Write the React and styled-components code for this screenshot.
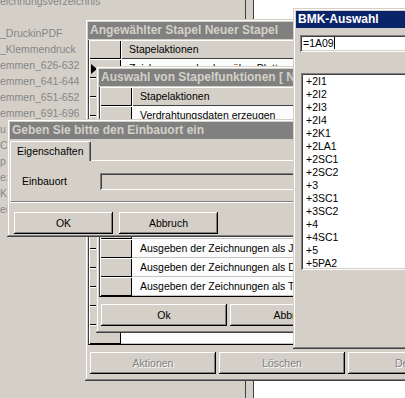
import React from 'react';
import styled, { createGlobalStyle, css } from 'styled-components';

const face = '#d4d0c8';

const raised = css`
  box-shadow: inset -1px -1px #404040, inset 1px 1px ${face}, inset -2px -2px #808080, inset 2px 2px #fff;
`;

const buttonEdge = css`
  box-shadow: inset -1px -1px #000, inset 1px 1px #fff, inset -2px -2px #808080, inset 2px 2px ${face};
`;

const sunken = css`
  box-shadow: inset 1px 1px #808080, inset -1px -1px #fff, inset 2px 2px #404040, inset -2px -2px ${face};
`;

const GlobalStyle = createGlobalStyle`
  html, body { margin: 0; padding: 0; background: ${face}; }
  body { font-family: "Liberation Sans", Arial, sans-serif; font-size: 10.5px; }
`;

const Desktop = styled.div`
  position: relative;
  width: 405px;
  height: 398px;
  overflow: hidden;
  background: ${face};
  display: flex;
`;

const TreeList = styled.ul`
  list-style: none;
  margin: -7px 0 0;
  padding: 0;
  width: 245px;
  flex: none;
  color: #868686;
  font-size: 10.5px;
  line-height: 16px;
  white-space: nowrap;
  overflow: hidden;
`;

const TreeItem = styled.li`
  height: 16px;
`;

const Splitter = styled.div`
  width: 7px;
  flex: none;
  border-left: 1px solid #404040;
  border-right: 1px solid #404040;
`;

const ContentPane = styled.div`
  flex: 1;
  background: #fff;
`;

const Window = styled.div`
  position: absolute;
  left: ${(p) => p.$x}px;
  top: ${(p) => p.$y}px;
  width: ${(p) => p.$w}px;
  height: ${(p) => p.$h}px;
  box-sizing: border-box;
  padding: 3px;
  background: ${face};
  ${raised}
  display: flex;
  flex-direction: column;
  overflow: hidden;
`;

const TitleBar = styled.div`
  flex: none;
  height: 17px;
  line-height: 17px;
  padding-left: 2px;
  margin-bottom: ${(p) => p.$gap ?? 1}px;
  background: ${(p) => (p.$active ? '#0a246a' : '#808080')};
  color: ${(p) => (p.$active ? '#fff' : face)};
  font-weight: bold;
  font-size: 12px;
  white-space: nowrap;
  overflow: hidden;
`;

/* data grid */
const Grid = styled.div`
  flex: none;
  display: flex;
  flex-direction: column;
  border-left: 1px solid #404040;
  border-bottom: 1px solid #000;
`;

const GridRow = styled.div`
  display: grid;
  grid-template-columns: 32px 1fr;
  height: 19px;
  flex: none;
`;

const RowHead = styled.div`
  background: ${face};
  box-shadow: inset 1px 1px #fff, inset -1px -1px #000;
  display: flex;
  align-items: center;
  padding-left: 2px;
`;

const CurrentArrow = styled.span`
  width: 0;
  height: 0;
  border-left: 6px solid #000;
  border-top: 5px solid transparent;
  border-bottom: 5px solid transparent;
`;

const ColHead = styled.div`
  background: ${face};
  box-shadow: inset 1px 1px #fff, inset -1px -1px #404040;
  padding-left: 8px;
  line-height: 19px;
  white-space: nowrap;
  overflow: hidden;
`;

const Cell = styled.div`
  background: #fbfcfb;
  border-bottom: 1px solid #c4c4c4;
  box-sizing: border-box;
  padding-left: 8px;
  line-height: 18px;
  white-space: nowrap;
  overflow: hidden;
`;

const ButtonRow = styled.div`
  flex: none;
  display: flex;
  gap: ${(p) => p.$gap}px;
  padding-left: ${(p) => p.$inset}px;
  margin-top: ${(p) => p.$top}px;
`;

const Button = styled.button`
  flex: none;
  width: ${(p) => p.$w}px;
  height: 22px;
  border: 0;
  padding: 0;
  background: ${face};
  ${buttonEdge}
  font-family: inherit;
  font-size: 10.5px;
  color: ${(p) => (p.disabled ? '#808080' : '#000')};
  text-shadow: ${(p) => (p.disabled ? '1px 1px #fff' : 'none')};
`;

/* dialog with tab */
const TabStrip = styled.div`
  flex: none;
  height: 19px;
  display: flex;
  margin-top: 1px;
`;

const Tab = styled.div`
  position: relative;
  z-index: 1;
  height: 20px;
  box-sizing: border-box;
  padding: 0 6px;
  line-height: 18px;
  background: ${face};
  border-top: 1px solid #fff;
  border-left: 1px solid #fff;
  border-right: 1px solid #404040;
  box-shadow: inset -1px 0 #808080;
  border-radius: 2px 2px 0 0;
`;

const TabPanel = styled.div`
  flex: none;
  height: 40px;
  display: flex;
  align-items: center;
  padding-left: 11px;
  border-top: 1px solid #fff;
  border-left: 1px solid #fff;
  border-bottom: 1px solid #808080;
  box-shadow: 0 1px #fff;
`;

const FieldLabel = styled.span`
  width: 78px;
  flex: none;
`;

const InputBox = styled.div`
  flex: 1;
  height: 17px;
  box-sizing: border-box;
  padding-left: 3px;
  line-height: 17px;
  background: ${(p) => (p.$white ? '#fff' : face)};
  ${sunken}
  white-space: nowrap;
`;

/* BMK picker */
const FieldStack = styled.div`
  flex: none;
  display: flex;
  flex-direction: column;
  gap: 2px;
  margin: 6px 0 0 4px;
`;

const Caret = styled.span`
  display: inline-block;
  width: 1px;
  height: 12px;
  background: #000;
  vertical-align: -2px;
`;

const ListBox = styled.ul`
  list-style: none;
  flex: none;
  height: 197px;
  box-sizing: border-box;
  margin: 15px 0 0 5px;
  padding: 2px 0 0 5px;
  background: #fff;
  ${sunken}
  overflow: hidden;
  line-height: 13px;
`;

const treeNames = [
  'eichnungsverzeichnis',
  '',
  '_DruckinPDF',
  '_Klemmendruck',
  'emmen_626-632',
  'emmen_641-644',
  'emmen_651-652',
  'emmen_691-696',
  'u Druck',
  'Chassis',
  'p Plot',
  'exportieren',
  'Kabel',
  'einbau',
];

const outerRows = Array.from({ length: 15 }, (_, i) =>
  i === 0 ? 'Zeichnungen drucken über Plotter' : ''
);

const innerRows = [
  'Verdrahtungsdaten erzeugen',
  'Klemmenpläne erzeugen',
  'Kabelpläne erzeugen',
  'Stücklisten erzeugen',
  'Zeichnungen prüfen',
  'Zeichnungen drucken',
  'Zeichnungen exportieren',
  'Ausgeben der Zeichnungen als JPG',
  'Ausgeben der Zeichnungen als  DXF',
  'Ausgeben der Zeichnungen als TIF',
];

const bmkItems = [
  '+2I1', '+2I2', '+2I3', '+2I4', '+2K1', '+2LA1', '+2SC1', '+2SC2',
  '+3', '+3SC1', '+3SC2', '+4', '+4SC1', '+5', '+5PA2', '+5PA3', '+6',
];

function DataGrid({ rows, current }) {
  return (
    <Grid>
      <GridRow>
        <RowHead />
        <ColHead>Stapelaktionen</ColHead>
      </GridRow>
      {rows.map((text, i) => (
        <GridRow key={i}>
          <RowHead>{i === current && <CurrentArrow />}</RowHead>
          <Cell>{text}</Cell>
        </GridRow>
      ))}
    </Grid>
  );
}

export default function App() {
  return (
    <>
      <GlobalStyle />
      <Desktop>
        <TreeList>
          {treeNames.map((n, i) => (
            <TreeItem key={i}>{n}</TreeItem>
          ))}
        </TreeList>
        <Splitter />
        <ContentPane />

        <Window $x={85} $y={19} $w={400} $h={362}>
          <TitleBar>Angewählter Stapel Neuer Stapel</TitleBar>
          <DataGrid rows={outerRows} current={0} />
          <ButtonRow $gap={3} $inset={2} $top={7}>
            <Button $w={126} disabled>Aktionen</Button>
            <Button $w={126} disabled>Löschen</Button>
            <Button $w={126} disabled>Details</Button>
          </ButtonRow>
        </Window>

        <Window $x={96} $y={66} $w={300} $h={267}>
          <TitleBar>Auswahl von Stapelfunktionen [ Neuer Stapel ]</TitleBar>
          <DataGrid rows={innerRows} current={-1} />
          <ButtonRow $gap={3} $inset={2} $top={7}>
            <Button $w={126}>Ok</Button>
            <Button $w={126}>Abbruch</Button>
          </ButtonRow>
        </Window>

        <Window $x={7} $y={119} $w={320} $h={118}>
          <TitleBar $gap={1}>Geben Sie bitte den Einbauort ein</TitleBar>
          <TabStrip>
            <Tab>Eigenschaften</Tab>
          </TabStrip>
          <TabPanel>
            <FieldLabel>Einbauort</FieldLabel>
            <InputBox />
          </TabPanel>
          <ButtonRow $gap={6} $inset={4} $top={10}>
            <Button $w={99}>OK</Button>
            <Button $w={99}>Abbruch</Button>
          </ButtonRow>
        </Window>

        <Window $x={293} $y={8} $w={130} $h={341}>
          <TitleBar $active>BMK-Auswahl</TitleBar>
          <FieldStack>
            <InputBox $white>
              =1A09<Caret />
            </InputBox>
            <InputBox />
            <InputBox />
            <InputBox />
          </FieldStack>
          <ListBox>
            {bmkItems.map((b) => (
              <li key={b}>{b}</li>
            ))}
          </ListBox>
        </Window>
      </Desktop>
    </>
  );
}
